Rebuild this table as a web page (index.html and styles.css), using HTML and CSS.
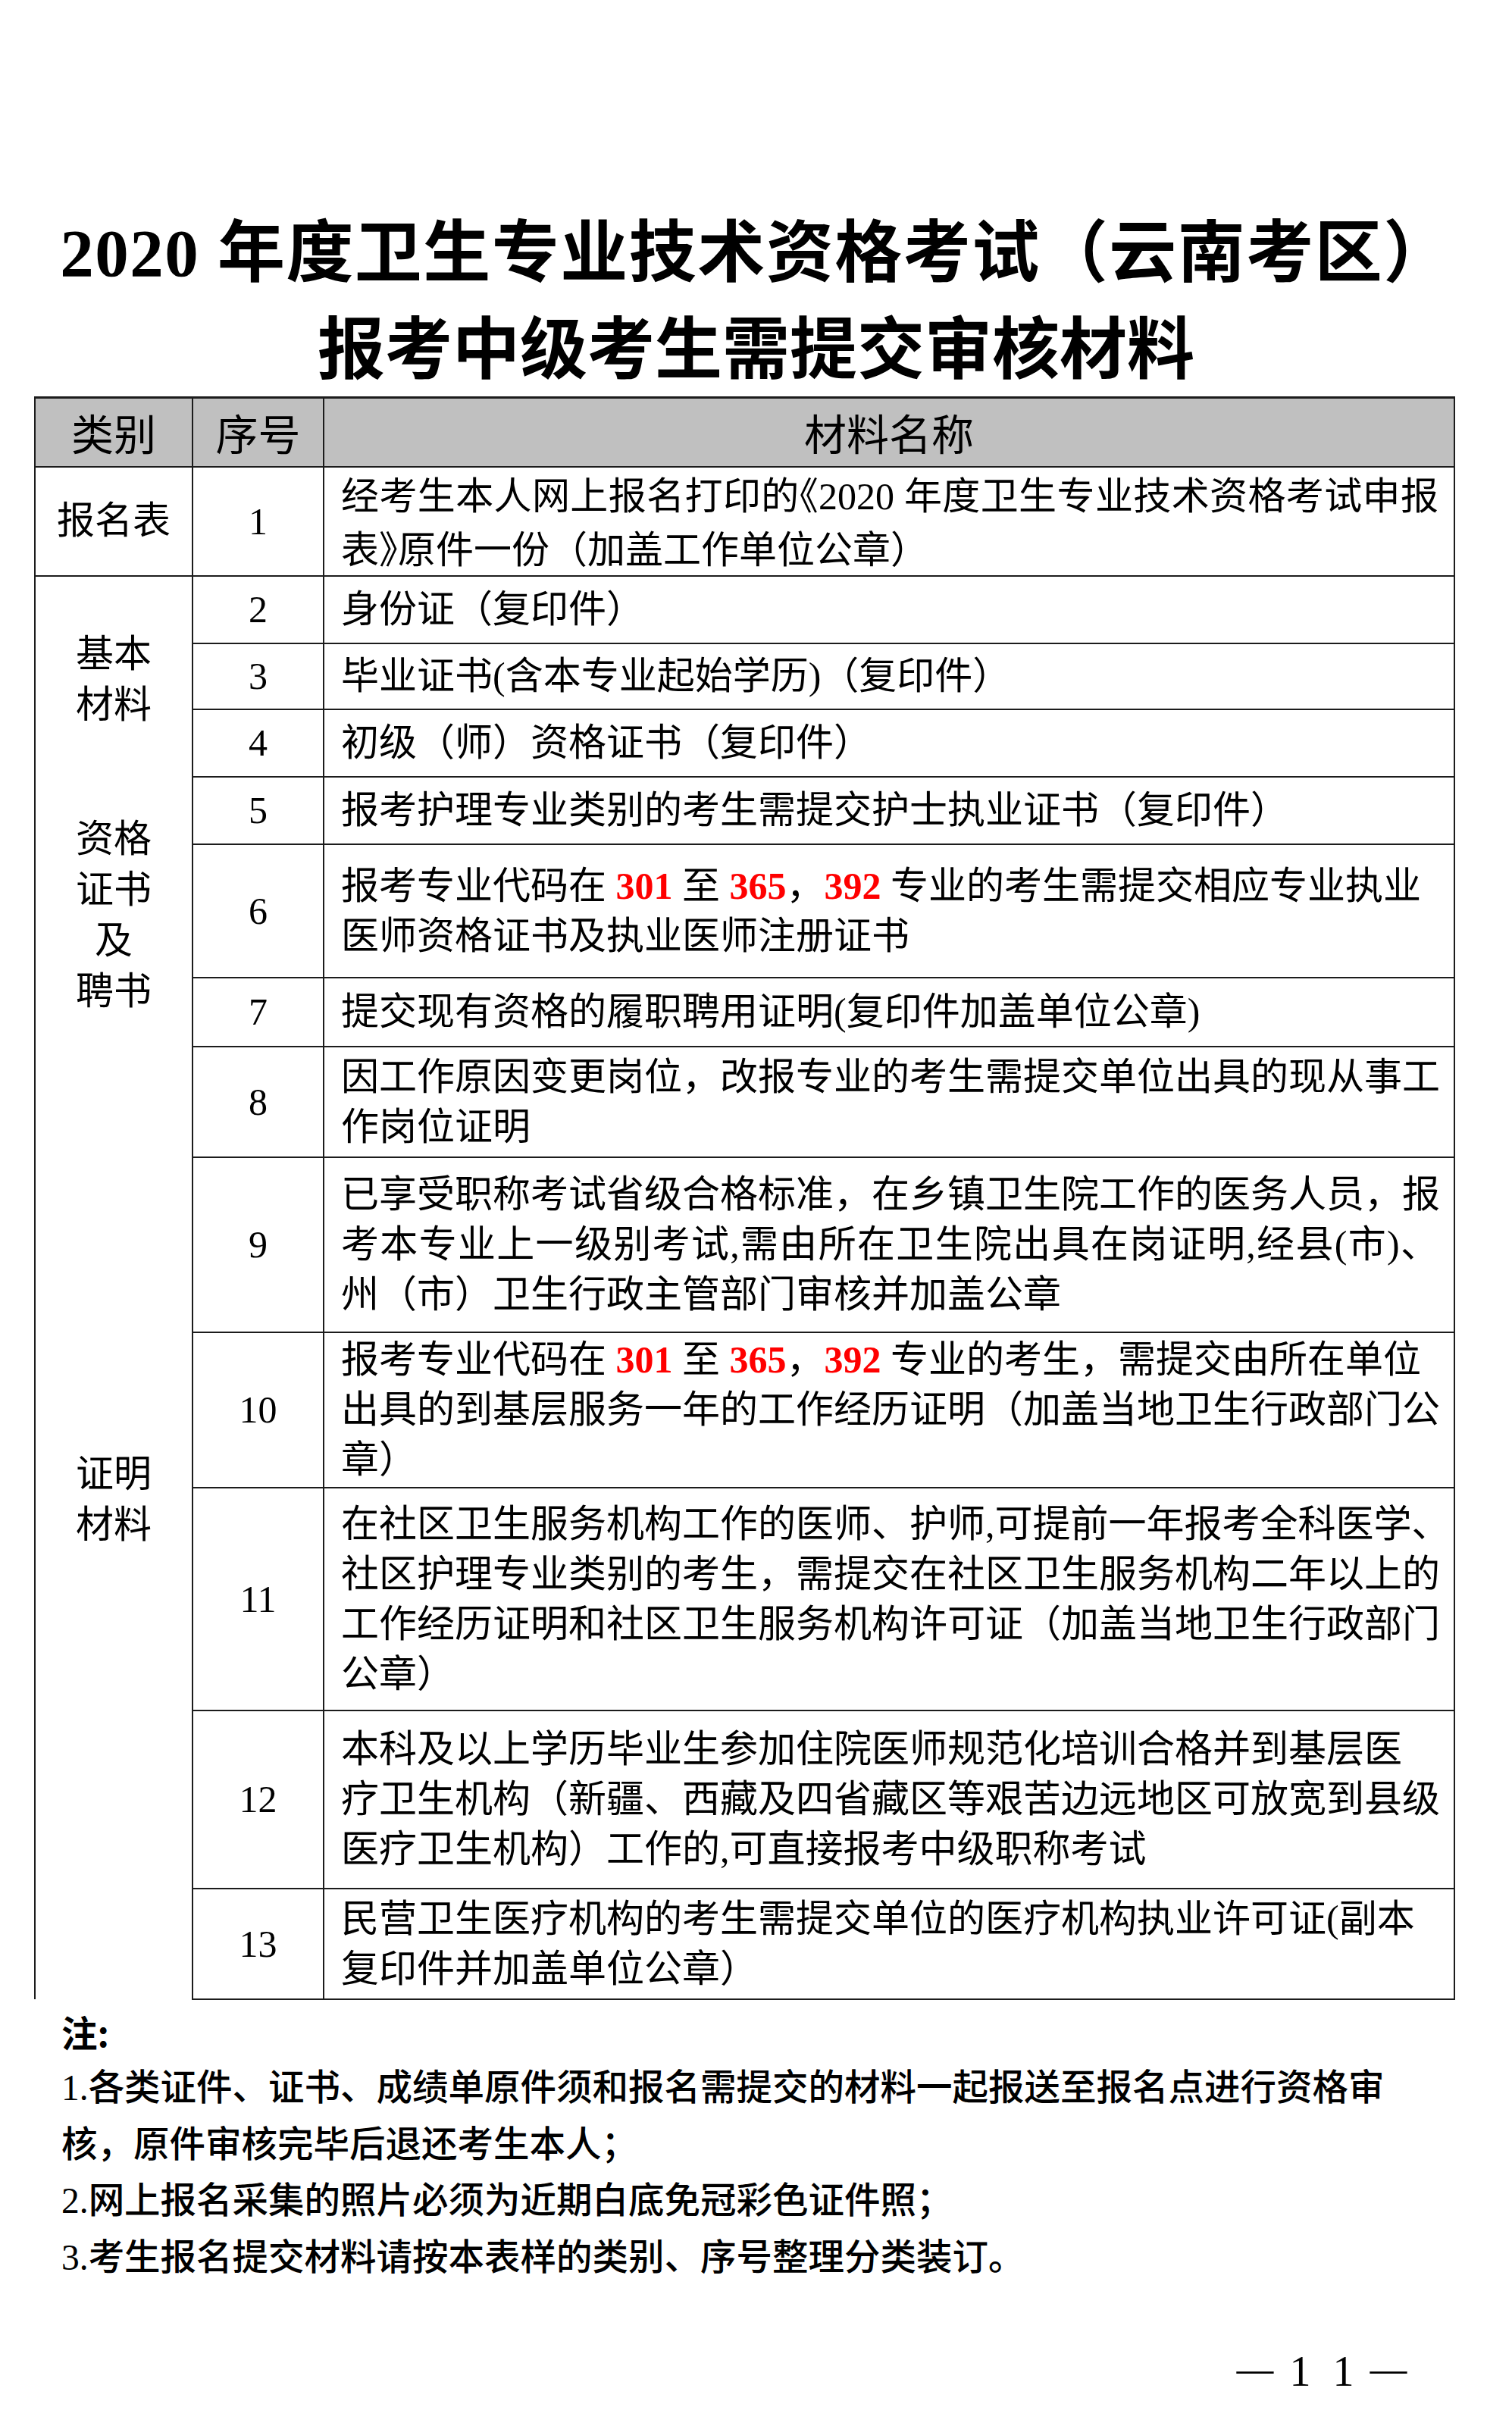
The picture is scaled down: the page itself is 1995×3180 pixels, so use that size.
FILE: index.html
```html
<!DOCTYPE html>
<html lang="zh-CN">
<head>
<meta charset="utf-8">
<title>2020年度卫生专业技术资格考试（云南考区）报考中级考生需提交审核材料</title>
<link rel="stylesheet" href="styles.css">
</head>
<body>
<div class="page">
  <h1 class="title">
    <span class="t-line t-wide">2020 年度卫生专业技术资格考试（云南考区）</span>
    <span class="t-line">报考中级考生需提交审核材料</span>
  </h1>

  <table class="sheet">
    <colgroup>
      <col class="c-cat">
      <col class="c-num">
      <col class="c-desc">
    </colgroup>
    <thead>
      <tr class="r-head">
        <th>类别</th>
        <th>序号</th>
        <th>材料名称</th>
      </tr>
    </thead>
    <tbody>
      <tr class="r-1">
        <td class="cat cat-mid">报名表</td>
        <td class="num">1</td>
        <td class="desc">
          <span class="ln full">经考生本人网上报名打印的<span class="half">《</span>2020 年度卫生专业技术资格考试申报</span>
          <span class="ln">表<span class="half">》</span>原件一份（加盖工作单位公章）</span>
        </td>
      </tr>
      <tr class="r-2">
        <td class="cat cat-merged" rowspan="12">
          <div class="cat-group g-basic"><span class="ln">基本</span><span class="ln">材料</span></div>
          <div class="cat-group g-cert"><span class="ln">资格</span><span class="ln">证书</span><span class="ln">及</span><span class="ln">聘书</span></div>
          <div class="cat-group g-proof"><span class="ln">证明</span><span class="ln">材料</span></div>
        </td>
        <td class="num">2</td>
        <td class="desc"><span class="ln">身份证（复印件）</span></td>
      </tr>
      <tr class="r-3">
        <td class="num">3</td>
        <td class="desc"><span class="ln">毕业证书(含本专业起始学历)（复印件）</span></td>
      </tr>
      <tr class="r-4">
        <td class="num">4</td>
        <td class="desc"><span class="ln">初级（师）资格证书（复印件）</span></td>
      </tr>
      <tr class="r-5">
        <td class="num">5</td>
        <td class="desc"><span class="ln">报考护理专业类别的考生需提交护士执业证书（复印件）</span></td>
      </tr>
      <tr class="r-6">
        <td class="num">6</td>
        <td class="desc">
          <span class="ln">报考专业代码在 <b class="red">301</b> 至 <b class="red">365</b>，<b class="red">392</b> 专业的考生需提交相应专业执业</span>
          <span class="ln">医师资格证书及执业医师注册证书</span>
        </td>
      </tr>
      <tr class="r-7">
        <td class="num">7</td>
        <td class="desc"><span class="ln">提交现有资格的履职聘用证明(复印件加盖单位公章)</span></td>
      </tr>
      <tr class="r-8">
        <td class="num">8</td>
        <td class="desc">
          <span class="ln full">因工作原因变更岗位，改报专业的考生需提交单位出具的现从事工</span>
          <span class="ln">作岗位证明</span>
        </td>
      </tr>
      <tr class="r-9">
        <td class="num">9</td>
        <td class="desc">
          <span class="ln full">已享受职称考试省级合格标准，在乡镇卫生院工作的医务人员，报</span>
          <span class="ln full">考本专业上一级别考试,需由所在卫生院出具在岗证明,经县(市)、</span>
          <span class="ln">州（市）卫生行政主管部门审核并加盖公章</span>
        </td>
      </tr>
      <tr class="r-10">
        <td class="num">10</td>
        <td class="desc">
          <span class="ln">报考专业代码在 <b class="red">301</b> 至 <b class="red">365</b>，<b class="red">392</b> 专业的考生，需提交由所在单位</span>
          <span class="ln full">出具的到基层服务一年的工作经历证明（加盖当地卫生行政部门公</span>
          <span class="ln">章）</span>
        </td>
      </tr>
      <tr class="r-11">
        <td class="num">11</td>
        <td class="desc">
          <span class="ln full">在社区卫生服务机构工作的医师、护师,可提前一年报考全科医学、</span>
          <span class="ln full">社区护理专业类别的考生，需提交在社区卫生服务机构二年以上的</span>
          <span class="ln full">工作经历证明和社区卫生服务机构许可证（加盖当地卫生行政部门</span>
          <span class="ln">公章）</span>
        </td>
      </tr>
      <tr class="r-12">
        <td class="num">12</td>
        <td class="desc">
          <span class="ln">本科及以上学历毕业生参加住院医师规范化培训合格并到基层医</span>
          <span class="ln full">疗卫生机构（新疆、西藏及四省藏区等艰苦边远地区可放宽到县级</span>
          <span class="ln">医疗卫生机构）工作的,可直接报考中级职称考试</span>
        </td>
      </tr>
      <tr class="r-13">
        <td class="num">13</td>
        <td class="desc">
          <span class="ln">民营卫生医疗机构的考生需提交单位的医疗机构执业许可证(副本</span>
          <span class="ln">复印件并加盖单位公章）</span>
        </td>
      </tr>
    </tbody>
  </table>

  <div class="notes">
    <p class="note-head">注:</p>
    <p class="note">1.各类证件、证书、成绩单原件须和报名需提交的材料一起报送至报名点进行资格审<br>核，原件审核完毕后退还考生本人；</p>
    <p class="note">2.网上报名采集的照片必须为近期白底免冠彩色证件照；</p>
    <p class="note">3.考生报名提交材料请按本表样的类别、序号整理分类装订。</p>
  </div>

  <div class="pager">
    <span class="pg-dash">—</span><span class="pg-digit">1</span><span class="pg-digit">1</span><span class="pg-dash">—</span>
  </div>
</div>
</body>
</html>
```

FILE: styles.css
```css
html, body {
  margin: 0;
  padding: 0;
  background: #ffffff;
}

body {
  width: 1995px;
  color: #000000;
  font-family: "Liberation Serif", "Noto Sans CJK SC", serif;
}

.page {
  padding-top: 270px;
  height: 2910px;
}

/* ---------- title ---------- */
.title {
  margin: 0;
  font-family: "Liberation Serif", "Noto Sans CJK SC", serif;
  font-weight: 700;
  font-size: 89px;
  line-height: 128px;
  text-align: center;
  height: 253px;
}

.t-line {
  display: block;
  white-space: nowrap;
}

.t-wide {
  letter-spacing: 1.5px;
}

/* ---------- table ---------- */
.sheet {
  margin-left: 45px;
  width: 1873px;
  border-collapse: collapse;
  table-layout: fixed;
}

.c-cat { width: 208px; }
.c-num { width: 173px; }
.c-desc { width: 1492px; }

.sheet th,
.sheet td {
  border: 2px solid #1c1c1c;
  padding: 0;
}

.sheet th {
  background: #c0c0c0;
  font-family: "Noto Sans CJK SC", sans-serif;
  font-weight: 400;
  font-size: 56px;
  line-height: 66px;
  text-align: center;
  vertical-align: middle;
  border-top-width: 3px;
}

.r-head { height: 91px; }
.r-1 { height: 142px; }
.r-2 { height: 89px; }
.r-3 { height: 87px; }
.r-4 { height: 89px; }
.r-5 { height: 89px; }
.r-6 { height: 176px; }
.r-7 { height: 91px; }
.r-8 { height: 146px; }
.r-9 { height: 231px; }
.r-10 { height: 205px; }
.r-11 { height: 294px; }
.r-12 { height: 235px; }
.r-13 { height: 146px; }

.cat {
  text-align: center;
  font-size: 50px;
  line-height: 67px;
}

.cat-mid {
  vertical-align: middle;
}

.cat-merged {
  vertical-align: top;
  border-bottom: none !important;
}

.cat-group .ln {
  display: block;
}

.g-basic { margin-top: 69px; }
.g-cert { margin-top: 110px; }
.g-proof { margin-top: 570px; }

.num {
  text-align: center;
  vertical-align: middle;
  font-size: 50px;
  line-height: 66px;
}

.desc {
  padding: 0 20px 0 22px !important;
  vertical-align: middle;
  font-size: 50px;
  line-height: 66px;
  text-align: left;
}

.ln {
  display: block;
  white-space: nowrap;
}

.ln.full {
  text-align: justify;
  text-align-last: justify;
}

.half {
  font-family: "Noto Sans CJK SC", sans-serif;
  font-feature-settings: "halt";
}

.red {
  color: #ff0000;
  font-weight: 700;
}

/* ---------- notes ---------- */
.notes {
  margin: 5px 0 0 81px;
  font-family: "Liberation Serif", "Noto Sans CJK SC", serif;
  font-size: 47.5px;
  line-height: 74.5px;
  font-weight: 500;
}

.notes p {
  margin: 0;
  white-space: nowrap;
}

.note-head {
  font-family: "Noto Sans CJK SC", sans-serif;
  font-weight: 700;
}

/* ---------- page number ---------- */
.pager {
  display: flex;
  justify-content: flex-end;
  align-items: baseline;
  padding-right: 132px;
  margin-top: 76px;
  line-height: 58px;
}

.pg-dash {
  width: 62px;
  text-align: center;
  font-family: "Noto Sans CJK SC", sans-serif;
  font-size: 62px;
  font-weight: 300;
}

.pg-digit {
  width: 57px;
  text-align: center;
  font-family: "Liberation Serif", serif;
  font-size: 56px;
}
```
